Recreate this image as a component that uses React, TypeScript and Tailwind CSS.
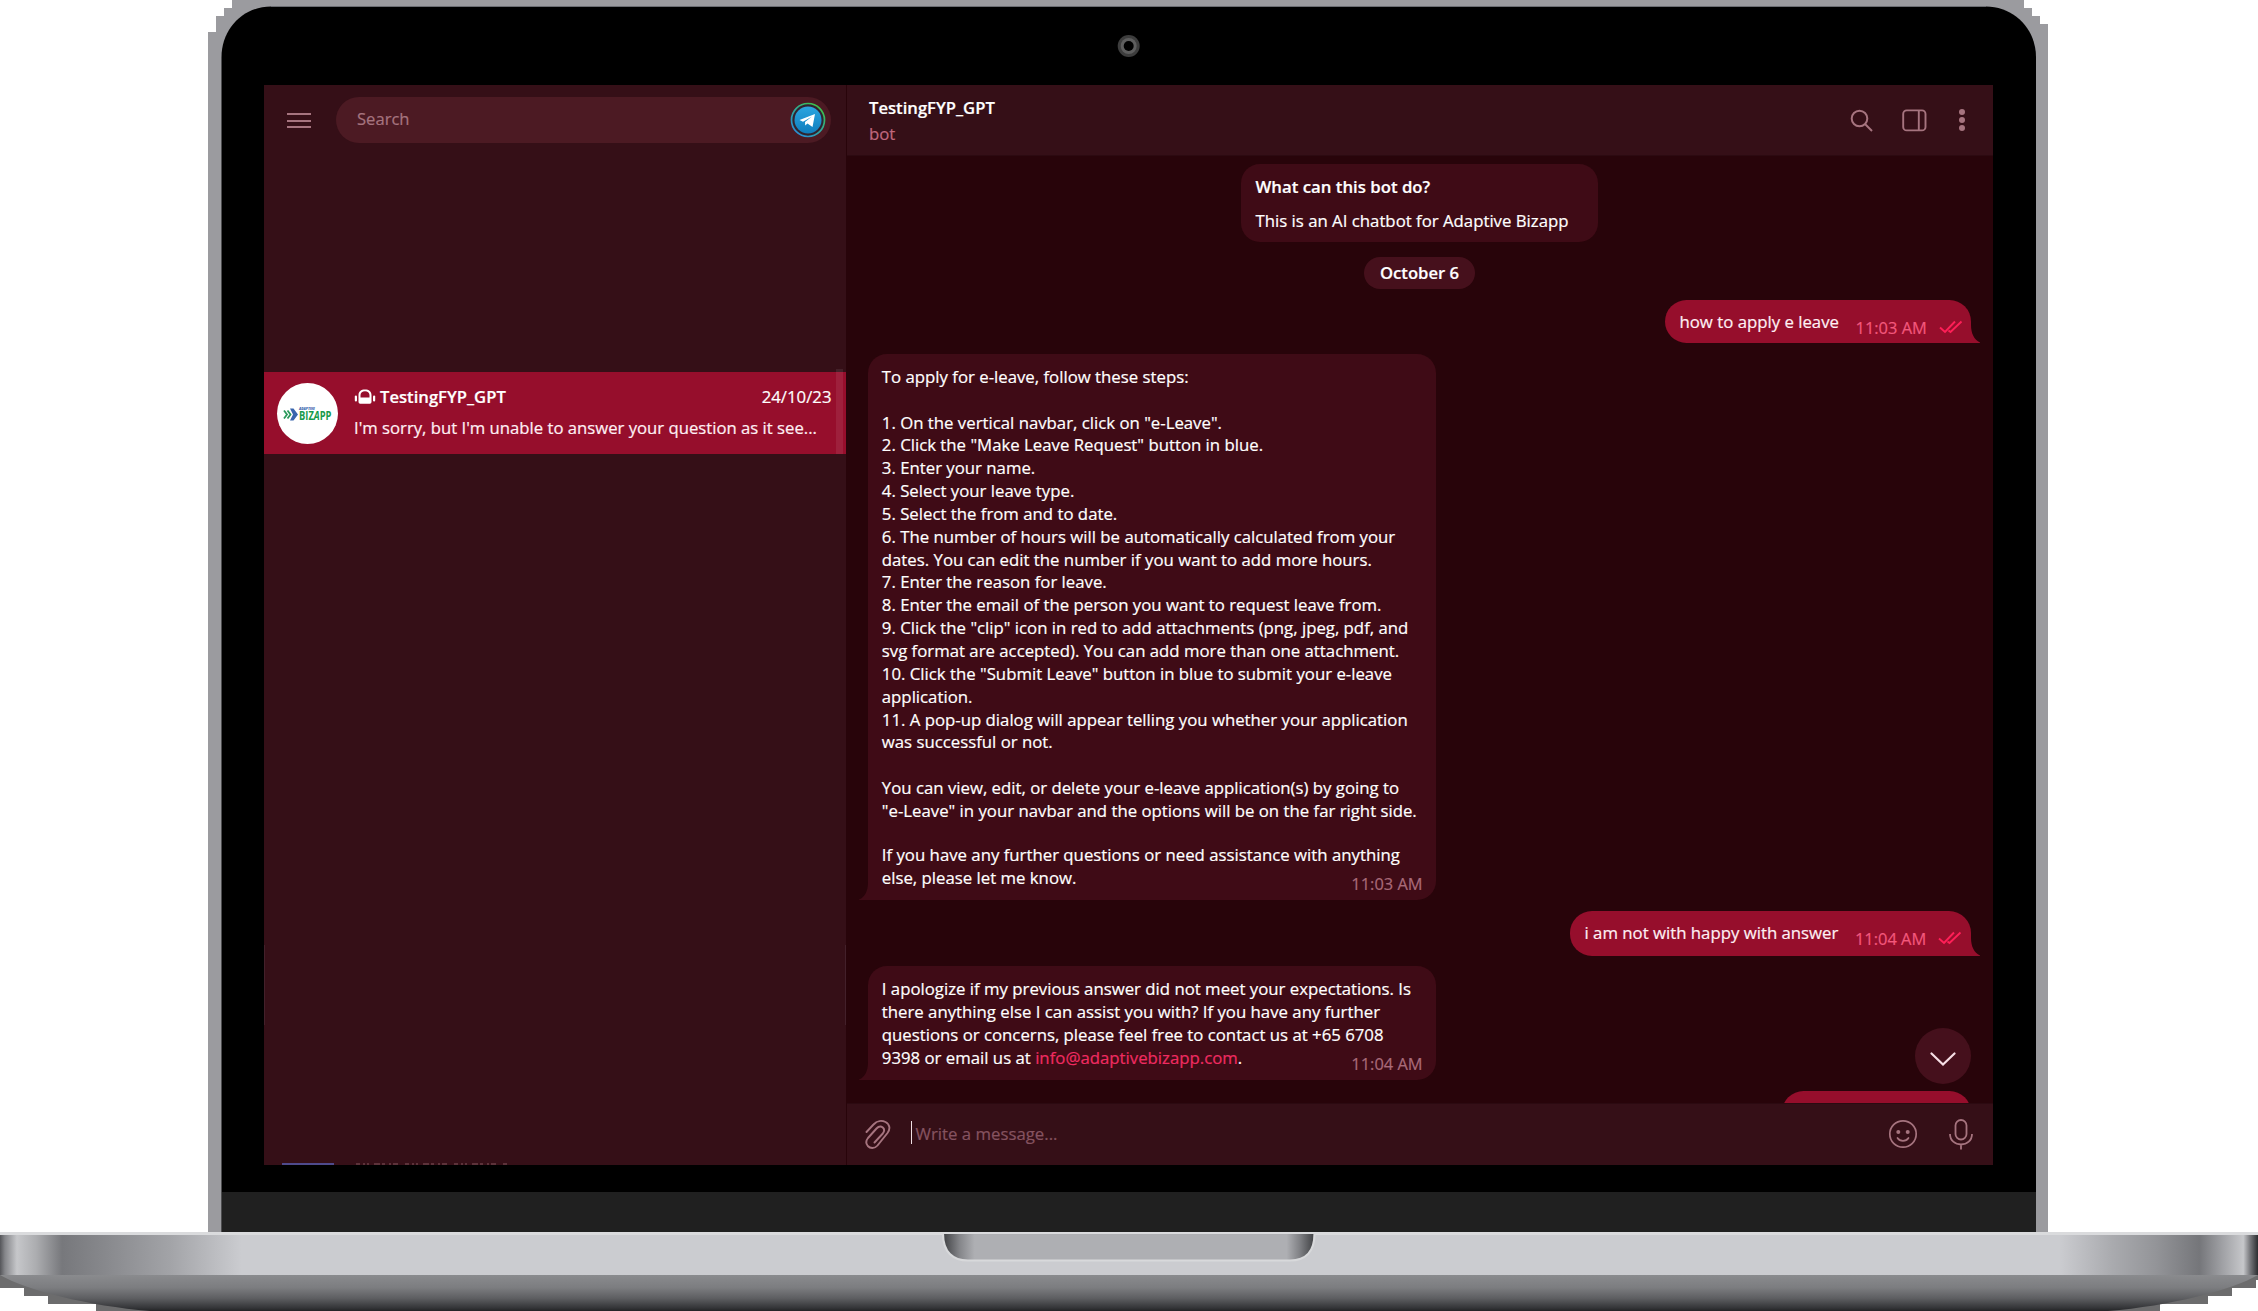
import React from "react";

const steps = [
  "To apply for e-leave, follow these steps:",
  "",
  "1. On the vertical navbar, click on \"e-Leave\".",
  "2. Click the \"Make Leave Request\" button in blue.",
  "3. Enter your name.",
  "4. Select your leave type.",
  "5. Select the from and to date.",
  "6. The number of hours will be automatically calculated from your",
  "dates. You can edit the number if you want to add more hours.",
  "7. Enter the reason for leave.",
  "8. Enter the email of the person you want to request leave from.",
  "9. Click the \"clip\" icon in red to add attachments (png, jpeg, pdf, and",
  "svg format are accepted). You can add more than one attachment.",
  "10. Click the \"Submit Leave\" button in blue to submit your e-leave",
  "application.",
  "11. A pop-up dialog will appear telling you whether your application",
  "was successful or not.",
  "",
  "You can view, edit, or delete your e-leave application(s) by going to",
  "\"e-Leave\" in your navbar and the options will be on the far right side.",
];

/* Laptop body: lid, camera, hinge strip, base and notch. */
function Laptop() {
  return (
    <svg className="absolute inset-0" width="2258" height="1311" viewBox="0 0 2258 1311">
      <defs>
        <linearGradient id="base" gradientUnits="userSpaceOnUse" x1="0" x2="2258" y1="0" y2="0">
          <stop offset="0" stopColor="#55565a" />
          <stop offset="0.0022" stopColor="#85868a" />
          <stop offset="0.0075" stopColor="#c6c7ca" />
          <stop offset="0.016" stopColor="#acadb0" />
          <stop offset="0.0275" stopColor="#77787c" />
          <stop offset="0.045" stopColor="#86878b" />
          <stop offset="0.075" stopColor="#a2a3a7" />
          <stop offset="0.107" stopColor="#cbccd0" />
          <stop offset="0.912" stopColor="#cbccd0" />
          <stop offset="0.935" stopColor="#aaabaf" />
          <stop offset="0.955" stopColor="#939498" />
          <stop offset="0.974" stopColor="#75767a" />
          <stop offset="0.985" stopColor="#a3a4a8" />
          <stop offset="0.9935" stopColor="#c6c7ca" />
          <stop offset="0.9965" stopColor="#77787c" />
          <stop offset="1" stopColor="#2c2d30" />
        </linearGradient>
        <linearGradient id="under" x1="0" x2="0" y1="0" y2="1">
          <stop offset="0" stopColor="#8a8b8e" />
          <stop offset="0.35" stopColor="#7c7d80" />
          <stop offset="0.65" stopColor="#5d5e61" />
          <stop offset="0.92" stopColor="#333437" />
          <stop offset="1" stopColor="#222325" />
        </linearGradient>
        <linearGradient id="notch" x1="0" x2="1" y1="0" y2="0">
          <stop offset="0" stopColor="#3f4043" />
          <stop offset="0.045" stopColor="#85868a" />
          <stop offset="0.085" stopColor="#aeafb3" />
          <stop offset="0.925" stopColor="#aeafb3" />
          <stop offset="0.96" stopColor="#808185" />
          <stop offset="1" stopColor="#3f4043" />
        </linearGradient>
      </defs>
      <path d="M232 0H2024V8H2032V16H2040V24H2048V1232H208V32H216V16H224V8H232Z" fill="#9b9b9f" />
      <path d="M221.500 1232V57C221.500 29 243 6.500 271 6.500H1986C2014 6.500 2036 29 2036 57V1232Z" fill="#000" />
      <path d="M271 6.500H1986" stroke="#6b6d72" />
      <rect x="222" y="1192" width="1814" height="40" fill="#202020" />
      <circle cx="1128.700" cy="46" r="11" fill="#3d3d3d" />
      <circle cx="1128.700" cy="46" r="8" fill="#5e5e5e" />
      <circle cx="1128.700" cy="46" r="5" fill="#000" />
      <path d="M0 1275H2258V1280H2256V1288H2232V1296H2208V1304H2160V1311H96V1304H48V1296H24V1288H0Z" fill="#6c6c6d" />
      <path d="M0 1275H2258C2232 1290 2170 1306 2108 1311H150C88 1306 26 1290 0 1275Z" fill="url(#under)" />
      <rect y="1232" width="2258" height="43" fill="url(#base)" />
      <rect y="1232" width="2258" height="3" fill="#dadbdd" />
      <path d="M943 1234C943 1252 953 1260.500 968 1260.500H1290C1305 1260.500 1314.500 1252 1314.500 1234" fill="url(#notch)" stroke="#d8d9db" strokeWidth="2.200" />
    </svg>
  );
}

function Checks() {
  return (
    <svg width="24" height="14" viewBox="0 0 24 14" fill="none" stroke="#ff1f57" strokeWidth="1.900" className="shrink-0">
      <path d="M1 7.500L6 12L16 1.500M9.500 10.500L11.500 12L22.500 1.500" />
    </svg>
  );
}

function Sent({ text, time, box }: { text: string; time: string; box: string }) {
  return (
    <div className={"relative mr-[22px] flex self-end rounded-[22px] rounded-br-none bg-[#960e2c] pl-[14.500px] " + box}>
      <span className="text-[#fff0f4]">{text}</span>
      <span className="ml-[16.500px] mt-[6px] text-[16.450px] text-[#f3587c]">{time}</span>
      <span className="ml-[12px] mt-[20px]"><Checks /></span>
      <svg className="absolute bottom-0 -right-[9px]" width="10" height="18" viewBox="0 0 10 18">
        <path d="M0 0H1C1 8 4 15 10 17.500V18H0Z" fill="#960e2c" />
      </svg>
    </div>
  );
}

function Tail() {
  return (
    <svg className="absolute bottom-0 -left-[9px]" width="10" height="18" viewBox="0 0 10 18">
      <path d="M10 0H9C9 9 6 15 0 17.500V18H10Z" fill="#3f0b16" />
    </svg>
  );
}

function Sidebar() {
  return (
    <aside className="flex w-[582px] flex-col overflow-hidden bg-[#350f17]">
      <div className="flex h-[69px] items-center pl-[23px]">
        <div className="mt-[2px] flex w-6 flex-col gap-[4.500px]">
          <i className="h-[2px] bg-[#a6747f]" />
          <i className="h-[2px] bg-[#a6747f]" />
          <i className="h-[2px] bg-[#a6747f]" />
        </div>
        <div className="ml-[25px] flex h-[46px] w-[495px] items-center justify-between rounded-full bg-[#4c1a23] pl-[21px] pr-[5px]">
          <span className="text-[16.600px] text-[#a6747f]">Search</span>
          <svg width="36" height="36" viewBox="0 0 36 36">
            <defs>
              <linearGradient id="ring" x1="0.800" y1="0.100" x2="0.200" y2="0.900">
                <stop offset="0" stopColor="#3cc04e" />
                <stop offset="0.500" stopColor="#2fa79a" />
                <stop offset="1" stopColor="#2a8fd0" />
              </linearGradient>
              <linearGradient id="tg" x1="0" y1="0" x2="0" y2="1">
                <stop offset="0" stopColor="#2ba5e0" />
                <stop offset="1" stopColor="#0f7dbd" />
              </linearGradient>
            </defs>
            <circle cx="18" cy="18" r="16.500" fill="#30242f" stroke="url(#ring)" strokeWidth="1.700" />
            <circle cx="18" cy="18" r="13.500" fill="url(#tg)" />
            <path d="M9.500 18L25 12L22.500 25L17.500 21.500L15.200 23.500L15 20L22 14.500L13 19.800Z" fill="#fff" />
          </svg>
        </div>
      </div>
      <div className="relative mt-[218px] flex h-[82px] bg-[#960e2c]">
        <div className="ml-[13px] mt-[11px] flex h-[61px] w-[61px] items-center justify-center rounded-full bg-white">
          <svg width="54" height="22" viewBox="-2 -3 54 22">
            <path d="M1 4.500L4 8.500L1 12.500M4.500 4.500L7.500 8.500L4.500 12.500" fill="none" stroke="#2b9a5b" strokeWidth="1.800" />
            <path d="M7 2.500H10.500L15 8.500L10.500 14.500H7L10 8.500Z" fill="#3a66ae" />
            <text x="16" y="4" fontSize="4" fontWeight="800" fontStyle="italic" fill="#3a66ae" textLength="16" lengthAdjust="spacingAndGlyphs">ADAPTIVE</text>
            <text x="16" y="13.700" fontSize="11.800" fontWeight="700" fill="#179a4a" textLength="32.500" lengthAdjust="spacingAndGlyphs">BIZ<tspan fontStyle="italic">A</tspan>PP</text>
          </svg>
        </div>
        <div className="flex flex-1 flex-col pl-[16px] pr-[14.500px] pt-[8.500px]">
          <div className="flex h-[32px] items-center leading-[32px]">
            <svg width="22" height="16" viewBox="0 0 22 16" className="mr-[4px]">
              <path fillRule="evenodd" d="M4.500 13V6C4.500 2.500 7 0.500 11 0.500S17.500 2.500 17.500 6V13Q17.500 14.700 15.800 14.700H6.200Q4.500 14.700 4.500 13ZM6.500 8.500H15.500V6C15.500 3.500 13.500 2.200 11 2.200S6.500 3.500 6.500 6Z" fill="#fff" />
              <rect x="0.800" y="6.500" width="2.200" height="6" rx="1.100" fill="#fff" />
              <rect x="19" y="6.500" width="2.200" height="6" rx="1.100" fill="#fff" />
            </svg>
            <span className="text-[16.650px] font-semibold text-white">TestingFYP_GPT</span>
            <span className="ml-auto text-white">24/10/23</span>
          </div>
          <span className="-mt-px text-[16.700px] leading-[32px] whitespace-nowrap text-[#fff0f4]">I'm sorry, but I'm unable to answer your question as it see...</span>
        </div>
        <i className="absolute right-[3px] -top-[3px] h-[85px] w-[7px] bg-white/8" />
      </div>
      <div className="mt-[491px] h-[80px] border-x border-[#43202a]" />
      <div className="mt-auto flex h-[2px] items-end pl-[18px]">
        <i className="h-[2px] w-[52px] bg-[#4f4a8c]" />
        <svg className="ml-[22px]" width="154" height="2" viewBox="0 0 154 2">
          <path d="M0 1H154" stroke="#a6747f" strokeWidth="1.200" strokeDasharray="4 3 2 2 2 5 6 2 3 4 2 2 5 7" opacity="0.700" />
        </svg>
      </div>
    </aside>
  );
}

function Header() {
  return (
    <header className="flex h-[71px] items-center border-b border-[#2c0a11] bg-[#350f17]">
      <div className="flex flex-col pl-[22px] pt-px leading-[26px]">
        <span className="text-[16.650px] font-semibold text-white">TestingFYP_GPT</span>
        <span className="text-[#c0687e]">bot</span>
      </div>
      <div className="ml-auto flex items-center pr-[28px]" >
        <svg width="23" height="23" viewBox="0 0 23 23" fill="none" stroke="#a6747f" strokeWidth="2">
          <circle cx="9.500" cy="9.500" r="7.800" />
          <path d="M15 15L22 22" />
        </svg>
        <svg className="ml-[29px]" width="25" height="23" viewBox="0 0 25 23" fill="none" stroke="#a6747f" strokeWidth="1.900">
          <rect x="1.200" y="1.400" width="22.300" height="20" rx="3.500" />
          <path d="M16.800 1.400V21.400" />
        </svg>
        <svg className="ml-[32px]" width="6" height="24" viewBox="0 0 6 24" fill="#a6747f">
          <circle cx="3" cy="4" r="3" />
          <circle cx="3" cy="12" r="3" />
          <circle cx="3" cy="20" r="3" />
        </svg>
      </div>
    </header>
  );
}

function Composer() {
  return (
    <footer className="flex h-[62px] items-center border-t border-[#2c0a11] bg-[#350f17] pb-px pl-[18px] pr-[19px]">
      <svg width="26" height="29" viewBox="0 0 26 29" fill="none" stroke="#a6747f" strokeWidth="1.900" strokeLinecap="round" strokeLinejoin="round">
        <path d="M1.500 12L8.500 4.500C12 0.500 17 0.300 20.500 2C25 4.500 25.500 9 22.500 13L12.500 25.500C9.500 29 5 28.500 2.800 26C0.700 23.500 1 20.500 3 18L11.500 8.500C13.500 6.300 16 6 17.800 7.500C19.500 9 19.300 11.500 17.800 13.500L9.500 22.500" />
      </svg>
      <i className="mb-[3px] ml-[20px] h-[23px] w-px bg-[#f0dfe3]" />
      <span className="ml-[3.500px] text-[#855360]">Write a message...</span>
      <svg className="ml-auto" width="30" height="30" viewBox="0 0 30 30" fill="none" stroke="#a6747f" strokeWidth="1.700">
        <circle cx="15" cy="15" r="13.200" />
        <circle cx="10.300" cy="13" r="2" fill="#a6747f" stroke="none" />
        <circle cx="19.700" cy="13" r="2" fill="#a6747f" stroke="none" />
        <path d="M9.500 19C12 22.800 18 22.800 20.500 19" strokeLinecap="round" />
      </svg>
      <svg className="ml-[30px]" width="26" height="32" viewBox="0 0 26 32" fill="none" stroke="#a6747f" strokeWidth="1.800">
        <rect x="7.500" y="2" width="11" height="19.500" rx="5.500" />
        <path d="M2 16C2 22.500 7 26.500 13 26.500S24 22.500 24 16M13 26.500V31.500" />
      </svg>
    </footer>
  );
}

export default function App() {
  return (
    <div className="relative h-[1311px] w-[2258px] overflow-hidden bg-white font-['Open_Sans',sans-serif] text-[16.770px] leading-[22.850px] [-webkit-text-stroke:0.2px]">
      <Laptop />
      <div className="relative pl-[264px] pt-[85px]">
        <div className="flex h-[1080px] w-[1729px]">
          <Sidebar />
          <main className="relative flex w-[1147px] flex-col border-l border-[#28040a] bg-[#28040a]">
            <Header />
            <div className="flex h-[947px] flex-col overflow-hidden text-white">
              <div className="mr-px mt-[8px] h-[78px] w-[357px] shrink-0 self-center rounded-[19px] bg-[#3f0b16] pl-[14.500px] pt-[5.500px] leading-[34px]">
                <div className="font-semibold">What can this bot do?</div>
                <div>This is an AI chatbot for Adaptive Bizapp</div>
              </div>
              <div className="mr-px mt-[15px] h-[32px] w-[111px] shrink-0 self-center rounded-full bg-[#46101c] text-center text-[16.650px] leading-[32px] font-semibold">October 6</div>
              <Sent text="how to apply e leave" time="11:03 AM" box="mt-[11px] h-[43px] w-[306px] shrink-0 leading-[43.500px]" />
              <div className="relative ml-[20.500px] mt-[11px] h-[546px] w-[568px] shrink-0 rounded-[19px] rounded-bl-none bg-[#3f0b16] pl-[14.300px] pt-[11.900px]">
                {steps.map((s, i) => (
                  <div key={i} className="h-[22.850px] whitespace-nowrap">{s}</div>
                ))}
                <div className="h-[21.500px]" />
                <div className="whitespace-nowrap">If you have any further questions or need assistance with anything</div>
                <div className="flex pr-[13px]">
                  <span>else, please let me know.</span>
                  <span className="relative top-[6px] ml-auto text-[16.400px] text-[#a96a79]">11:03 AM</span>
                </div>
                <Tail />
              </div>
              <Sent text="i am not with happy with answer" time="11:04 AM" box="mt-[11px] h-[45px] w-[401px] shrink-0 leading-[44.500px]" />
              <div className="relative ml-[20.500px] mt-[10px] h-[114px] w-[568px] shrink-0 rounded-[19px] rounded-bl-none bg-[#3f0b16] pl-[14.300px] pt-[12.300px]">
                <div className="whitespace-nowrap">I apologize if my previous answer did not meet your expectations. Is</div>
                <div>there anything else I can assist you with? If you have any further</div>
                <div>questions or concerns, please feel free to contact us at +65 6708</div>
                <div className="flex pr-[13px]">
                  <span>9398 or email us at <span className="text-[#f02b61]">info@adaptivebizapp.com</span>.</span>
                  <span className="relative top-[6px] ml-auto text-[16.400px] text-[#a96a79]">11:04 AM</span>
                </div>
                <Tail />
              </div>
              <div className="mr-[22px] mt-[11px] h-[43px] w-[189px] shrink-0 self-end rounded-[22px] bg-[#960e2c]" />
            </div>
            <Composer />
            <div className="absolute right-[22px] bottom-[81px] flex h-[56px] w-[56px] items-center justify-center rounded-full bg-[#45101c]">
              <svg className="mt-[5px]" width="26" height="14" viewBox="0 0 26 14" fill="none" stroke="#f6dfe5" strokeWidth="2.200" strokeLinecap="round">
                <path d="M1.500 1.500L13 12.500L24.500 1.500" />
              </svg>
            </div>
          </main>
        </div>
      </div>
    </div>
  );
}
